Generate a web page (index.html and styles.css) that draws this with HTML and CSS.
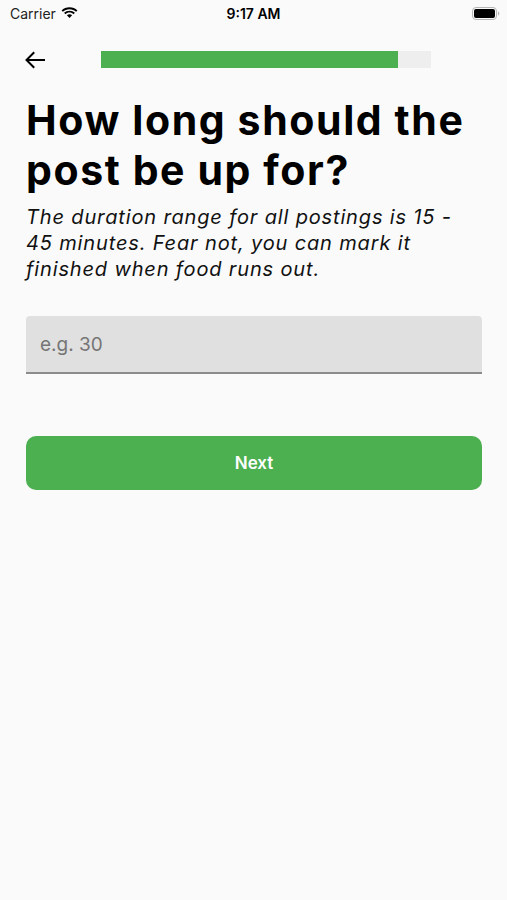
FILE: index.html
```html
<!DOCTYPE html>
<html lang="en">
<head>
<meta charset="utf-8">
<title>Post duration</title>
<link rel="stylesheet" href="styles.css">
</head>
<body>
<div class="status-bar">
  <div class="sb-left">
    <span class="carrier">Carrier</span>
    <svg class="wifi" width="17" height="12" viewBox="0 0 17 12">
      <path d="M8.5 2.2c2.6 0 4.9 1 6.6 2.6l1.3-1.4C14.4 1.5 11.6.3 8.5.3S2.6 1.5.6 3.4l1.3 1.4C3.6 3.2 5.9 2.2 8.5 2.2z" fill="#000"/>
      <path d="M8.5 5.6c1.6 0 3 .6 4.1 1.6l1.3-1.4C12.5 4.5 10.6 3.7 8.5 3.7S4.5 4.5 3.1 5.8l1.3 1.4c1.1-1 2.5-1.6 4.1-1.6z" fill="#000"/>
      <path d="M8.5 7.2c-1 0-1.9.4-2.6 1l2.6 2.8 2.6-2.8c-.7-.6-1.6-1-2.6-1z" fill="#000"/>
    </svg>
  </div>
  <div class="sb-time">9:17 AM</div>
  <div class="sb-right">
    <svg class="battery" width="28" height="13" viewBox="0 0 28 13">
      <rect x="0.5" y="0.5" width="24" height="12" rx="3.5" fill="none" stroke="#b5b5b5"/>
      <rect x="2" y="2" width="21" height="9" rx="2" fill="#000"/>
      <path d="M26 4.5v4c.8-.3 1.3-1.1 1.3-2s-.5-1.7-1.3-2z" fill="#b5b5b5"/>
    </svg>
  </div>
</div>

<div class="top-row">
  <button class="back" aria-label="Back">
    <svg width="22" height="18" viewBox="0 0 22 18">
      <path d="M20 9H3M9.5 2L2.5 9l7 7" fill="none" stroke="#000" stroke-width="2" stroke-linecap="square"/>
    </svg>
  </button>
  <div class="progress"><div class="progress-fill" style="width:90%"></div></div>
</div>

<main class="content">
  <h1 class="title">How long should the post be up for?</h1>
  <p class="subtitle">The duration range for all postings is 15 - 45 minutes. Fear not, you can mark it finished when food runs out.</p>
  <div class="field"><span class="placeholder">e.g. 30</span></div>
  <button class="next">Next</button>
</main>
</body>
</html>
```

FILE: styles.css
```css
html, body {
  margin: 0;
  padding: 0;
  background: #fafafa;
  font-family: Inter, "Noto Sans", sans-serif;
  color: #000;
}

.status-bar {
  height: 27px;
  display: flex;
  align-items: center;
  justify-content: space-between;
  padding: 0 7px 0 10px;
  position: relative;
}
.sb-left {
  display: flex;
  align-items: center;
  gap: 5px;
  font-size: 14px;
  color: #222;
}
.wifi { margin-top: -1px; }
.sb-time {
  position: absolute;
  left: 0;
  right: 0;
  text-align: center;
  font-size: 14px;
  font-weight: 600;
  pointer-events: none;
}
.sb-right { display: flex; align-items: center; }

.top-row {
  display: flex;
  align-items: center;
  padding: 24px 0 0 24px;
  height: 17px;
}
.back {
  border: 0;
  background: none;
  padding: 0;
  width: 22px;
  height: 18px;
  display: flex;
  margin-right: 55px;
}
.progress {
  width: 330px;
  height: 17px;
  background: #eeeeee;
}
.progress-fill {
  height: 100%;
  background: #4caf50;
}

.content {
  padding: 0 25px 0 26px;
}
.title {
  margin: 27px 0 0;
  font-size: 41px;
  line-height: 50px;
  font-weight: 700;
  letter-spacing: 1.6px;
}
.subtitle {
  margin: 9px 0 0;
  max-width: 445px;
  font-size: 20px;
  line-height: 26px;
  font-style: italic;
  letter-spacing: 0.85px;
  color: #111;
}
.field {
  margin-top: 34px;
  height: 56px;
  background: #e0e0e0;
  border-bottom: 2px solid #8c8c8c;
  border-radius: 4px 4px 0 0;
  display: flex;
  align-items: center;
  padding-left: 14px;
}
.placeholder {
  font-size: 19px;
  color: #757575;
}
.next {
  display: block;
  width: 100%;
  margin-top: 62px;
  height: 54px;
  border: 0;
  border-radius: 10px;
  background: #4caf50;
  color: #fff;
  font-family: Inter, "Noto Sans", sans-serif;
  font-size: 17px;
  font-weight: 600;
}
```
